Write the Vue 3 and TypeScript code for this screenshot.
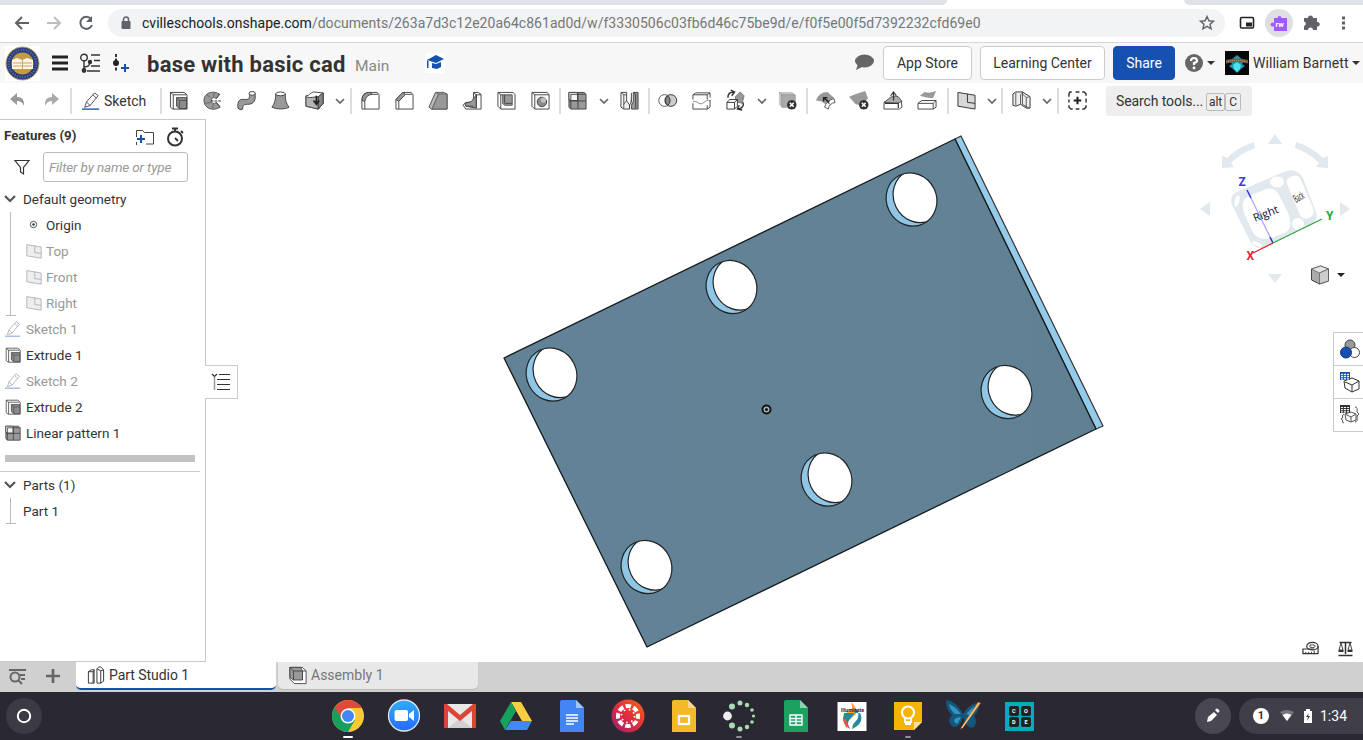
<script setup lang="ts">
interface Tool { icon?: string; w: number; kind: 'icon' | 'chev' | 'sep' }

const badge = '<circle cx="14.500" cy="14.500" r="5" fill="#333"/><path d="m12.500 12.500 4 4m0-4-4 4" stroke="#fff" stroke-width="1.500"/>'
const icons: Record<string, string> = {
  extrude: '<path d="M1.500 1.500H16L19 4V19H4L1.500 17Z" fill="#fff" stroke="#444"/><path d="M1.500 1.500 4.500 4V19M4.500 4H18" fill="none" stroke="#444"/><path d="M8 7H18.500V18.500H11L8 16Z" fill="#8c8c8c" stroke="#444"/><path d="m8 7 3 3V18M11 10h7" fill="none" stroke="#555"/>',
  revolve: '<path d="M17 3C10-1 1 2 1 10s9 12 17 7l-4-5c-3 2-5 1-5-2s2-4 5-2Z" fill="#999" stroke="#555"/><path d="M4 4 8 7M2 13l6-1M10 18l1-5M12 1.500l-1 5" stroke="#666"/><path d="M8 10.500h12" stroke="#333" stroke-dasharray="3 1"/><path d="m14 8 4-5M14 12l4 5" stroke="#444"/>',
  sweep: '<path d="M1 18C0 10 3 8 9 9c5 0 4-3 4-7h6c1 8-1 12-8 12-4 0-5 1-5 5Q3 21 1 18Z" fill="#999" stroke="#444"/><ellipse cx="16" cy="2.500" rx="3.200" ry="2" fill="#fff" stroke="#444"/>',
  loft: '<path d="M5 3h10c0 7 1 10 4 14-4 2.500-13 2.500-18 0C4 13 5 9 5 3Z" fill="#999" stroke="#444"/><ellipse cx="10" cy="3" rx="5" ry="2" fill="#fff" stroke="#444"/>',
  thicken: '<path d="M1 5c4 0 4-3 8-4l10 1v11l-5 6L1 16Z" fill="#fff" stroke="#444"/><path d="M1 6c5 2 8 0 13 0v13L1 16ZM14 6l5-4v11l-5 6Z" fill="#b5b5b5" stroke="#444"/><path d="M14 6l5-4v11l-5 6Z" fill="#888" stroke="#444"/><path d="M12 5v8m-3-3 3 4 3-4" fill="none" stroke="#222" stroke-width="1.800"/>',
  fillet: '<path d="M1 19V10Q1 1.500 9 1.500H17L19 4V19Z" fill="#fff" stroke="#444"/><path d="M1 10Q1 1.500 9 1.500l3 2Q5 4 4 11Z" fill="#999" stroke="#444"/><path d="M12 3.500h6M4 11v8" stroke="#444"/>',
  chamfer: '<path d="M1 19V9L8 1.500H17L19 4V19Z" fill="#fff" stroke="#444"/><path d="m1 9 7-7.500 3 2L4 11Z" fill="#999" stroke="#444"/><path d="M11 3.500h7M4 11v8" stroke="#444"/>',
  draft: '<path d="M0 17 7 1.500h9l3 2V19H3Z" fill="#fff" stroke="#555"/><path d="M10 3h9v16H3Z" fill="#999" stroke="#555"/><path d="m0 17 7-15.500L10 3 3 19Z" fill="#bbb" stroke="#666"/>',
  rib: '<path d="M0 15 3 12h8V1.500h5l3 2V19H3Z" fill="#fff" stroke="#444"/><path d="m2 13 7-2 5-7v14L3 16Z" fill="#999" stroke="#444"/><path d="M11 2l3 2v14M14 4h5M3 16h8" stroke="#444" fill="none"/>',
  shell: '<path d="M1 1.500H17L19 4V19H4L1 16Z" fill="#fff" stroke="#444"/><path d="M6 4h10v11H8L6 13Z" fill="#999" stroke="#555"/><path d="M8 4v9h8M4 4v15M1 1.500 4 4H6" stroke="#444" fill="none"/>',
  hole: '<path d="M1 1.500H17L19 4V19H4L1 16Z" fill="#fff" stroke="#444"/><path d="M4 4h15M4 4v15M1 1.500 4 4" stroke="#444"/><circle cx="11.500" cy="11.500" r="5" fill="#8c8c8c" stroke="#444"/><circle cx="13" cy="9.500" r="2.700" fill="#c2c2c2"/>',
  pattern: '<path d="M1 1.500h16l2 2V19H3l-2-2Z" fill="#999" stroke="#444"/><path d="M1 1.500h8l1 1.500v7H3L1 9Z" fill="#f3f3f3" stroke="#444"/><path d="M3 3.500h7M3 3.500V19M10.500 2v17M1 10.500h18M10.500 3.500h8" stroke="#444" fill="none"/>',
  mirror: '<path d="M1 1.500h6v9l3 4V19H4l-3-2Z" fill="#f0f0f0" stroke="#444"/><path d="M4 4v15M1 1.500 4 4h3M7 10l-3 4" stroke="#555" fill="none"/><path d="M12 2v10l-2 3v4M14 1.500h5V19h-7v-4l2-4Z" fill="#999" stroke="#444"/><path d="M16.500 4v14M14 2l3 2" stroke="#444"/>',
  boolean: '<circle cx="7" cy="10" r="6.200" fill="#fff" stroke="#555"/><circle cx="13.500" cy="10" r="6.200" fill="#ccc" stroke="#333"/><path d="M10.250 5a6.200 6.200 0 0 1 0 10 6.200 6.200 0 0 1 0-10Z" fill="#888" stroke="#333"/>',
  split: '<path d="M1 9V4l3-2h15v5M1 4h15v5M16 4l3-2M1 13v6h15v-4M16 19l3-2v-7" fill="none" stroke="#444"/><path d="M1 11c5-1 6 4 10 2s4-4 9-3" fill="none" stroke="#888"/>',
  transform: '<path d="m10 6 5-5 4 4-2 8-7-2Z" fill="#999" stroke="#777"/><path d="m1 12 3-3h8v7l-3 3H1ZM1 12h8v7M9 12l3-3" fill="#fff" stroke="#333"/><path d="M2 7c0-4 2-6 6-6M5-1l4 2-3 4M18 12c1 4-1 6-5 7m1-4-2 4 5 1" fill="none" stroke="#333" stroke-width="1.500"/>',
  delpart: '<path d="M1 1h14l3 3v13H4l-3-3Z" fill="#c4c4c4"/><path d="M4 4h14v13H4ZM1 1l3 3" fill="#aaa" stroke="#999"/>' + badge,
  modface: '<path d="M0 10Q3 1 12 1l7 6-9 7-4-3Z" fill="#999"/><path d="M9 17Q11 10 19 8l1 4q-6 1-7 7ZM12 12l3 2" fill="#fff" stroke="#555"/><path d="m14 12-6-5m0 4V7h4" fill="none" stroke="#222" stroke-width="1.500"/>',
  delface: '<path d="m-1 6 8-3 9-3 3 8-8 7-5-1Z" fill="#999"/>' + badge,
  moveface: '<path d="m0 12 5-3 13 1 1 7-3 2H0Z" fill="#fff" stroke="#444"/><path d="m0 12 4-3q4-5 11-3l4 5-5 2Z" fill="#aaa" stroke="#555"/><path d="M10 10V2M7 5l3-4 3 4M1 13h14v5" fill="none" stroke="#333" stroke-width="1.300"/>',
  replace: '<path d="m2 5 5-4q5 2 12-1l-3 7q-6 1-14-2Z" fill="#999"/><path d="m0 13 4-3h15v7l-3 2H0Zm0 0h16v6m0-6 3-3" fill="#fff" stroke="#444"/>',
  plane: '<path d="m1 1.500 18 3V19L1 16Z" fill="#d8d8d8" stroke="#333"/><path d="M11 3v9l8 1" fill="none" stroke="#333"/>',
  framei: '<path d="M1 3 4 1h7l8 5v12h-4L9 14l-5 2-3-1Z" fill="#eee" stroke="#333"/><path d="M4 2v13M11 1v13l7 4M11 2 9 4v10M15 18V7l-4-4M15 7l3-1" fill="none" stroke="#555"/>',
  addtool: '<path d="M4 1H2L1 3v3m0 3v3m0 3v2l2 2h2m3 0h4m3 0h2l2-2v-2m0-3V8m0-3V3l-2-2h-2m-3 0H8" fill="none" stroke="#333" stroke-width="1.500"/><path d="M10 6v8m-4-4h8" stroke="#222" stroke-width="2.200"/>',
  pencil: '<path d="m3 17 2-6L14 1l4 3-9 11Zm2-6 4 4M12 3l4 4" fill="#fff" stroke="#444"/><path d="M0 19h19" stroke="#1651b0" stroke-width="1.500"/>',
  planeS: '<path d="m1 2 18 3v14L1 16Z" fill="#eee" stroke="#aaa"/><path d="M11 3v9l8 1" fill="none" stroke="#aaa"/>'
}

const ic = (icon: string): Tool => ({ icon, w: 34, kind: 'icon' })
const chev = (w: number): Tool => ({ w, kind: 'chev' })
const sep = (w: number): Tool => ({ w, kind: 'sep' })
const tools: Tool[] = [
  ...['extrude', 'revolve', 'sweep', 'loft', 'thicken'].map(ic), chev(16), sep(6),
  ...['fillet', 'chamfer', 'draft', 'rib', 'shell', 'hole'].map(ic), sep(3),
  ic('pattern'), chev(18), ic('mirror'), sep(4),
  ...['boolean', 'split', 'transform'].map(ic), chev(18), ic('delpart'), sep(4),
  ...['modface', 'delface', 'moveface', 'replace'].map(ic), sep(5),
  ic('plane'), chev(15), sep(6), ic('framei'), chev(16), sep(6), ic('addtool')
]

const features = [
  { icon: 'pencil', name: 'Sketch 1', dim: true },
  { icon: 'extrude', name: 'Extrude 1', dim: false },
  { icon: 'pencil', name: 'Sketch 2', dim: true },
  { icon: 'extrude', name: 'Extrude 2', dim: false },
  { icon: 'pattern', name: 'Linear pattern 1', dim: false }
]
const holes: [number, number][] = [[551.500, 374.500], [731.500, 287], [911.500, 199.500], [1006.500, 392], [826.500, 479.500], [646.500, 567]]
const dots = [[10, 2, 2.500], [17, 4, 2.200], [22, 9, 1.800], [23.500, 15, 1.600], [22, 21, 1.800], [17, 26, 2.200], [10, 28, 2.500], [2, 24.500, 3], [-2.500, 15, 4.400], [2, 5.500, 3]]
</script>

<template>
  <div class="page">
    <div class="strip"><i class="s1"></i><i class="s2"></i></div>
    <div class="chrome">
      <svg class="nav" viewBox="0 0 108 36" fill="none" stroke="#5f6368" stroke-width="2">
        <path d="M29 18H16m6-6-6 6 6 6" /><path d="M47 18h13m-6-6 6 6-6 6" stroke="#bcbec1" />
        <path d="M91 14a6 6 0 1 0 1 6" /><path d="M92 11v6h-6Z" fill="#5f6368" stroke="none" />
      </svg>
      <div class="omni">
        <svg width="10" height="14" viewBox="0 0 10 14"><rect y="5" x=".5" width="9" height="8" rx="1" fill="#5f6368" /><path d="M2.500 6V3.500a2.500 2.500 0 0 1 5 0V6" fill="none" stroke="#5f6368" stroke-width="1.500" /></svg>
        <span class="url">cvilleschools.onshape.com<b>/documents/263a7d3c12e20a64c861ad0d/w/f3330506c03fb6d46c75be9d/e/f0f5e00f5d7392232cfd69e0</b></span>
        <svg class="star" width="16" height="16" viewBox="0 0 16 16"><path d="m8 1.500 1.900 4.300 4.600.4-3.500 3 1.100 4.600L8 11.400l-4.100 2.400L5 9.200l-3.500-3 4.600-.4Z" fill="none" stroke="#5f6368" stroke-width="1.400" /></svg>
      </div>
      <svg class="ext" viewBox="0 0 138 36">
        <rect x="15.500" y="12.500" width="13" height="10.500" rx="1.200" fill="#fff" stroke="#222" stroke-width="1.600" /><rect x="21" y="17.500" width="6" height="4" fill="#222" />
        <circle cx="54" cy="18" r="14" fill="#dfdfe0" /><path d="M49 13h3.500a2 2 0 1 1 4 0H62v13H49v-5a2 2 0 1 1 0-3Z" fill="#a259ff" /><text x="50.500" y="22" font-size="7.500" font-weight="700" fill="#fff">rw</text>
        <path d="M80 14h4a2.500 2.500 0 1 1 5 0h4v4a2.300 2.300 0 1 1 0 4.500V26h-4a2.500 2.500 0 0 0-5 0h-4v-4a2.300 2.300 0 0 0 0-4.500Z" fill="#5f6368" transform="translate(-1 -1)" />
        <path d="M118.500 11.500v3m0 2v3m0 2v3" stroke="#5f6368" stroke-width="3" />
      </svg>
    </div>

    <header class="head">
      <svg class="seal" viewBox="0 0 35 35"><rect width="35" height="35" fill="#fff" /><circle cx="17.500" cy="17.500" r="16.500" fill="#283c7c" stroke="#bba56b" /><circle cx="17.500" cy="17.500" r="13.700" fill="none" stroke="#64709b" stroke-width="2.500" stroke-dasharray="1 1.600" /><circle cx="17.500" cy="17.500" r="11" fill="#c39b48" /><path d="m7 14 5-2 5 2 5-2 6 2v9H7Z" fill="#fff4df" /><path d="M8 17h19M8 20h19M17.500 14v9" stroke="#c4a56a" /></svg>
      <svg class="burger" viewBox="0 0 16 16"><path d="M0 2h16M0 8h16M0 14h16" stroke="#222" stroke-width="2.800" /></svg>
      <svg class="ver" viewBox="0 0 20 20" fill="none" stroke="#333" stroke-width="1.400"><circle cx="4" cy="4.500" r="3.300" /><path d="M4 8v9M4 14q6 0 6-5M11 2h9M14 7.500h6M11 13h9M7 18h13" /><circle cx="4" cy="17.500" r="1.700" fill="#333" /><circle cx="10" cy="9" r="1.500" fill="#333" /></svg>
      <svg class="ins" viewBox="0 0 18 20"><path d="M4 1v18" stroke="#222" stroke-width="1.800" stroke-dasharray="3 1.500" /><circle cx="4" cy="10" r="3" fill="#222" /><path d="M13 11v8m-4-4h8" stroke="#1651b0" stroke-width="2" /></svg>
      <h1>base with basic cad</h1><span class="main">Main</span>
      <svg class="cap" viewBox="0 0 20 20"><rect width="20" height="20" rx="3" fill="#fff" /><path d="m2 7 9-5 8 4-8 4Z" fill="#1651b0" /><path d="M7 10v5l5 1 4-2V9l-5 2ZM2 7v8h1.500V8Z" fill="#1651b0" /></svg>
      <svg class="talk" viewBox="0 0 20 18"><ellipse cx="10.500" cy="7" rx="9.500" ry="6.500" fill="#666" /><path d="m4 10-2 6 8-4Z" fill="#666" /></svg>
      <button class="btn store">App Store</button><button class="btn learn">Learning Center</button><button class="btn share">Share</button>
      <svg class="help" viewBox="0 0 30 18"><circle cx="9" cy="9" r="9" fill="#666" /><path d="M6 7q0-3 3-3t3 2.700Q12 8 9 9v2" fill="none" stroke="#fff" stroke-width="2.200" /><circle cx="9" cy="14" r="1.400" fill="#fff" /><path d="M22 7h8l-4 4Z" fill="#333" /></svg>
      <svg class="avatar" viewBox="0 0 24 24"><rect width="24" height="24" fill="#050608" /><path d="m5 10 7-6 7 6-2 3 3 2-4 3-4 4-4-4-4-3 3-2Z" fill="#1b9aaa" /><path d="m8 14 4-3 4 3-1 4-3 3-3-3Z" fill="#49e1f0" /><path d="M1 9q11-3 22 0v3.500q-11-3-22 0Z" fill="#7a5a48" /><path d="M3 10.500q9-2 18 0" stroke="#d19a72" stroke-dasharray="1 1" fill="none" /></svg>
      <span class="user">William Barnett</span><svg class="caret" viewBox="0 0 8 4"><path d="M0 0h8L4 4Z" fill="#333" /></svg>
    </header>

    <div class="tools">
      <svg class="undo" viewBox="0 0 70 36"><path d="m10 16 7-6v4q8 0 7 9-2-5-7-5v4Z" fill="#999" /><path d="m59 16-7-6v4q-8 0-7 9 2-5 7-5v4Z" fill="#aaa" /></svg>
      <i class="tool sep sfirst"></i>
      <button class="sketch"><svg viewBox="0 0 20 20" v-html="icons.pencil"></svg>Sketch</button>
      <i class="tool sep ssecond"></i>
      <span v-for="(t, i) in tools" :key="i" class="tool" :class="t.kind" :style="{ width: t.w + 'px' }">
        <svg v-if="t.icon" viewBox="0 0 20 20" v-html="icons[t.icon]"></svg>
        <svg v-else-if="t.kind === 'chev'" class="chevron" viewBox="0 0 10 6"><path d="m1 1 4 4 4-4" fill="none" stroke="#666" stroke-width="1.700" /></svg>
      </span>
      <div class="search">Search tools... <kbd class="alt">alt</kbd><kbd>C</kbd></div>
    </div>

    <main>
      <aside>
        <div class="title"><span>Features (9)</span>
          <svg class="folder" viewBox="0 0 20 18"><path d="M1.500 9V2.500h6l2 2h9v11.500H11M1.500 14v3" fill="none" stroke="#444" /><path d="M6 7v8M2 11h8" stroke="#1651b0" stroke-width="2" /></svg>
          <svg class="watch" viewBox="0 0 18 20"><circle cx="9" cy="11.500" r="7" fill="#fff" stroke="#333" stroke-width="2" /><path d="M6 1.500h6M9 2v3M15 4l2 2M9 11l3 3" stroke="#333" stroke-width="1.800" /></svg>
        </div>
        <div class="filter"><svg viewBox="0 0 16 16"><path d="M1 1.500h14L9.500 8.500V15l-3-2V8.500Z" fill="none" stroke="#333" stroke-width="1.200" /></svg><div class="input">Filter by name or type</div></div>
        <div class="group"><svg viewBox="0 0 12 8"><path d="m1 1 5 5 5-5" fill="none" stroke="#555" stroke-width="2.200" /></svg>Default geometry</div>
        <div class="branch">
          <div class="row"><svg viewBox="0 0 16 16"><circle cx="7.500" cy="7.500" r="3.200" fill="none" stroke="#555" /><circle cx="7.500" cy="7.500" r="1.200" fill="#333" /></svg>Origin</div>
          <div v-for="p in ['Top', 'Front', 'Right']" :key="p" class="row dim"><svg viewBox="0 0 20 20" v-html="icons.planeS"></svg>{{ p }}</div>
        </div>
        <div v-for="f in features" :key="f.name" class="feat" :class="{ dim: f.dim }"><svg viewBox="0 0 20 20" v-html="icons[f.icon]"></svg>{{ f.name }}</div>
        <div class="roll"></div>
        <div class="group parts"><svg viewBox="0 0 12 8"><path d="m1 1 5 5 5-5" fill="none" stroke="#555" stroke-width="2.200" /></svg>Parts (1)</div>
        <div class="branch one"><div class="row">Part 1</div></div>
      </aside>

      <div class="view">
        <svg class="model" viewBox="206 119 1157 543">
          <defs><linearGradient id="shade" x1="0" y1="0" x2="1" y2="0"><stop offset="0" stop-color="#628397" /><stop offset=".7" stop-color="#628296" /><stop offset="1" stop-color="#5f7f92" /></linearGradient>
            <clipPath id="bore"><ellipse rx="25" ry="27" transform="rotate(-26)" /></clipPath></defs>
          <path d="m955 139 6-3 142 290-7 3Z" fill="#95cbea" stroke="#333" stroke-width="1.200" stroke-linejoin="round" />
          <path d="m504 358 451-219 141 290-449 218Z" fill="url(#shade)" stroke="#15191c" stroke-width="1.300" stroke-linejoin="round" />
          <g v-for="h in holes" :key="h[0]" :transform="`translate(${h[0]} ${h[1]})`">
            <ellipse rx="25" ry="27" transform="rotate(-26)" fill="#8fc5e5" />
            <g clip-path="url(#bore)"><ellipse cx="7" cy="-3.500" rx="25" ry="27" transform="rotate(-26 7 -3.500)" fill="#fff" stroke="#222" stroke-width="1.200" /></g>
            <ellipse rx="25" ry="27" transform="rotate(-26)" fill="none" stroke="#222" stroke-width="1.200" />
          </g>
          <circle cx="766.500" cy="409.500" r="4" fill="#a5b5be" stroke="#111" stroke-width="2" /><circle cx="766.500" cy="409.500" r="1.500" fill="#111" />
        </svg>
        <svg class="cube" viewBox="0 0 173 175">
          <g fill="#e1e8ee"><path d="m78 24 7-10 7 10ZM78 154h14l-7 9ZM20 82l-10 7 10 7ZM150 82l10 7-10 7Z" /><path d="M64 22Q48 27 37 38l-5-2v12l12-1-3-4q10-10 24-15ZM106 22q16 5 27 16l5-2v12l-12-1 3-4q-10-10-24-15Z" />
            <path d="M47 72Q39 75 42 85L60 121Q66 131 75 127L119 106Q129 102 126 92L113 58Q107 48 96 51Z" /></g>
          <g fill="#fff"><path d="M59 76 76 69Q85 67 89 75L98 93Q104 107 95 113L81 118Q67 121 62 111L54 93Q50 80 59 76Z" /><path d="M97 64q-2-5 4-7 7-4 10 3l12 28q3 7-4 10-7 3-10-5Z" /><ellipse cx="87" cy="62" rx="7" ry="5.500" /><ellipse cx="108" cy="104" rx="6" ry="6" transform="rotate(-25 108 104)" /><ellipse cx="47" cy="81" rx="2.300" ry="6" transform="rotate(15 47 81)" /><ellipse cx="67" cy="124" rx="2" ry="5" transform="rotate(-65 67 124)" /></g>
          <path d="M59 74 83 123" stroke="#aaaaf5" stroke-width="1.300" /><path d="m57 70 4 8M80 117l3 6" stroke="#3939cc" stroke-width="1.500" /><path d="M83 123 132 99" stroke="#2ca53b" stroke-width="1.200" /><path d="m83 123-20 10" stroke="#dd2832" stroke-width="1.300" />
          <g font-size="12" font-weight="700"><text x="48.500" y="66" fill="#3939dd">Z</text><text x="136" y="100" fill="#20a738">Y</text><text x="56.500" y="140" fill="#dd2930">X</text></g>
          <text transform="translate(65 102) rotate(-22)" font-size="11" fill="#111" class="face">Right</text><text transform="translate(106 83) rotate(-30) scale(.48 1.1)" font-size="10" fill="#111" class="face">Back</text>
          <g stroke="#444" stroke-linejoin="round"><path d="m121.500 149 9-3 8 3v12l-9 3-8-4Z" fill="#aaa" /><path d="m121.500 149 9-3 8 3-9 4Z" fill="#e5e5e5" stroke-width=".6" /><path d="m129.500 153 9-4v12l-9 3Z" fill="#ccc" stroke-width=".6" /></g><path d="M147 153h8l-4 4Z" fill="#222" />
        </svg>
        <button class="flyout"><svg viewBox="0 0 20 20"><path d="m1 2 2.500 2.500L6 2M8 2.500h11M6 7.500h13M6 12.500h13M6 17.500h13" fill="none" stroke="#333" stroke-width="1.200" /><path d="M3.500 5v13" stroke="#999" stroke-width="1.500" /></svg></button>
        <div class="rail">
          <button><svg viewBox="0 0 20 20" stroke="#444"><circle cx="10" cy="6" r="5" fill="#999" /><circle cx="14.500" cy="13.500" r="5" fill="#fff" /><circle cx="6" cy="13.500" r="5.500" fill="#1651b0" stroke="#143975" /></svg></button>
          <button><svg viewBox="0 0 20 20"><path d="m4 9 8-3 7 3v8l-7 3-7-4Zm1 1 7 3 7-4m-7 4v7" fill="#fff" stroke="#333" /><path d="M0 0h10v8H0Z" fill="#1651b0" /><path d="M1 2.500h8M1 4.700h8M1 6.900h8" stroke="#fff" stroke-width="1.300" /><path d="M3.300 0v8M6.600 0v8" stroke="#1651b0" /></svg></button>
          <button><svg viewBox="0 0 20 20"><path d="m5 9 6-2 5 2v6l-5 2-5-2Zm0 0 6 3 5-3m-5 3v5M4 9q-2 0-1.500 4L1 14l1.500 1Q2 18 4 18M15 2q3 0 2 5l2 2-2 2q1 6-2 6" fill="none" stroke="#555" /><path d="M0 0h10v8H0Z" fill="#333" /><path d="M1 2.500h8M1 4.700h8M1 6.900h8" stroke="#fff" stroke-width="1.200" /><path d="M3.300 0v8M6.600 0v8" stroke="#333" /></svg></button>
        </div>
        <div class="measure"><svg viewBox="0 0 18 16"><ellipse cx="11" cy="5" rx="6" ry="4" fill="#fff" stroke="#333" stroke-width="1.300" /><ellipse cx="11" cy="5" rx="3" ry="1.500" fill="none" stroke="#333" /><path d="M17 5v8H1V8h12" fill="none" stroke="#333" stroke-width="1.300" /><path d="M4 13v-2m3 2v-2m3 2v-2m3 2v-3" stroke="#333" /></svg><svg viewBox="0 0 16 16"><path d="M8 1v12M2 1.500h12M1 14.500h14" fill="none" stroke="#333" stroke-width="1.500" /><path d="M3.500 2 1.500 9h4ZM12.500 2l-2 7h4Z" fill="none" stroke="#444" /><path d="M1 9h5v2H1ZM10 9h5v2h-5Z" fill="#333" /></svg></div>
      </div>
    </main>

    <footer class="tabs">
      <svg class="find" viewBox="0 0 18 18"><path d="M0 2h17M11 7h5M12 11h4" stroke="#666" stroke-width="1.800" /><circle cx="6" cy="9" r="4.500" fill="none" stroke="#666" stroke-width="2" /><path d="m9 12 4 4" stroke="#666" stroke-width="2" /></svg>
      <svg class="plus" viewBox="0 0 16 16"><path d="M8 1v14M1 8h14" stroke="#666" stroke-width="2.700" /></svg>
      <div class="tab active"><svg viewBox="0 0 18 20"><path d="m1 6 3-2h3v14H1Zm0 0h5v12M6 6l2-2M10 3l2-2h2l3 3v12l-3 2h-4ZM10 3l4 2v13m0-13 3-1" fill="none" stroke="#333" /></svg>Part Studio 1</div>
      <div class="tab"><svg viewBox="0 0 20 20"><path d="M1 1h14l4 4v14H6l-5-5Z" fill="#fff" stroke="#444" /><path d="M1 1h12l2 4v10H5l-4-3Z" fill="#999" stroke="#444" /><path d="m1 1 4 4h14M5 5v10M15 5v10" fill="none" stroke="#444" /></svg>Assembly 1</div>
    </footer>

    <div class="shelf">
      <svg class="launcher" viewBox="0 0 36 36"><circle cx="18" cy="18" r="18" fill="#3c3b45" /><circle cx="18" cy="18" r="6.200" fill="none" stroke="#fff" stroke-width="2" /></svg>
      <div class="apps">
        <svg viewBox="0 0 32 32"><circle cx="16" cy="16" r="16" fill="#fbc934" /><path d="M2.500 7.500A16 16 0 0 0 16 32l7-12-7-4Z" fill="#17a05d" /><path d="M2.500 7.500A16 16 0 0 1 30 8H16l-7 9Z" fill="#dd4b3e" /><circle cx="16" cy="16" r="7.500" fill="#fff" /><circle cx="16" cy="16" r="6" fill="#4686f4" /></svg>
        <svg viewBox="0 0 32 32"><defs><linearGradient id="zm" x2="0" y2="1"><stop stop-color="#31aef8" /><stop offset="1" stop-color="#2868ff" /></linearGradient></defs><circle cx="16" cy="15.500" r="15.500" fill="url(#zm)" stroke="#dbe8f0" stroke-width="1.300" /><rect x="6.500" y="10" width="13.500" height="11" rx="2" fill="#fff" /><path d="m21 14 5-4v11l-5-4Z" fill="#fff" /></svg>
        <svg viewBox="0 0 32 32"><path d="M0 4h32v24H0Z" fill="#e8e8e8" /><path d="m4 28 12-10 12 10Z" fill="#d0d0d0" /><path d="M0 28V4h3l13 11L29 4h3v24h-4V11L16 21 4 11v17Z" fill="#dc4437" /></svg>
        <svg viewBox="0 0 32 32"><path d="M11 2h10l11 19H22Z" fill="#fbcd42" /><path d="m11 2 5 9L5 30l-5-9Z" fill="#16a15e" /><path d="M11 21h21l-5 9H5Z" fill="#4386f5" /></svg>
        <svg viewBox="0 0 32 32"><path d="M4 2q0-2 2-2h14l8 8v24H4Z" fill="#4285f4" /><path d="m20 0 8 8h-8Z" fill="#a1c2fa" /><path d="M10 15h12M10 18h12M10 21h12M10 24h8" stroke="#fff" stroke-width="1.300" /></svg>
        <svg viewBox="0 0 32 32"><defs><linearGradient id="cv" x2="1" y1="1" y2="0"><stop stop-color="#972174" /><stop offset=".5" stop-color="#e12c3c" /><stop offset="1" stop-color="#fa6a15" /></linearGradient></defs><circle cx="16" cy="16" r="16.500" fill="url(#cv)" /><circle cx="16" cy="16" r="10" fill="none" stroke="#fff" stroke-width="4" stroke-dasharray="5.500 2.354" stroke-dashoffset="2.750" /><circle cx="16" cy="16" r="6.500" fill="none" stroke="#fff" stroke-width="1.600" stroke-dasharray="1.600 3.505" /></svg>
        <svg viewBox="0 0 32 32"><path d="M4 2q0-2 2-2h14l8 8v24H4Z" fill="#f4b928" /><path d="m20 0 8 8h-8Z" fill="#fad98a" /><rect x="11" y="16" width="10" height="8" fill="none" stroke="#fff" stroke-width="2.200" /></svg>
        <svg viewBox="0 0 32 32"><circle v-for="(d, i) in dots" :key="i" :cx="d[0] + 6" :cy="d[1] + 1" :r="d[2]" :fill="i === 8 ? '#eee' : '#a9dcb1'" /></svg>
        <svg viewBox="0 0 32 32"><path d="M4 2q0-2 2-2h14l8 8v24H4Z" fill="#1ba261" /><path d="m20 0 8 8h-8Z" fill="#8dd1ae" /><path d="M10 15h12v10H10Zm0 3.500h12m-12 3h12M16 15v10" fill="none" stroke="#fff" stroke-width="1.400" /></svg>
        <svg viewBox="0 0 32 32"><path d="M1.500 2h29v29h-29Z" fill="#fff" /><path d="M15 2q7 6 5 12l-8 7-1 8Q2 15 15 10q2-3 0-8Z" fill="#f6a33c" /><path d="M8 13q-3 11 6 16-4-6 0-10 6-6 5-11 7 7 0 14-4 4-3 7 13-6 8-16" fill="#238aa0" /><path d="M7 16q-1 8 7 13-3-8-7-13Z" fill="#ef543e" /><path d="M16 28q-1-5 6-12" stroke="#fff" fill="none" /><text x="5" y="11.500" font-size="5" font-weight="700" textLength="23" fill="#222">Illuminate</text></svg>
        <svg viewBox="0 0 32 32"><path d="M2 2h28v20l-8 8H2Z" fill="#f5b400" /><path d="M22 22h8l-8 8Z" fill="#fde1a0" /><circle cx="16" cy="12.500" r="6" fill="none" stroke="#fff" stroke-width="2.200" /><path d="M13 18v4h6v-4M13 24h6" fill="none" stroke="#fff" stroke-width="2" /></svg>
        <svg viewBox="0 0 32 32"><path d="M15 14Q8 1-2 0q0 10 6 15-6 6 0 11 7 4 11-9 4 13 11 10 4-5 0-11 6-6 5-13-8-1-16 11Z" fill="#14577d" /><path d="M13 14Q7 6 1 4q1 6 6 10M13 17q-5 0-7 3 1 5 4 3M18 14l8-8q-2 6-4 9" fill="#3293bf" /><path d="m12 30 2-4L30 2l3 1-17 23Z" fill="#e37b30" /><path d="M14 28 31 3" stroke="#ffd084" stroke-width="1.300" /></svg>
        <svg viewBox="0 0 32 32"><path d="M1 2h29v29H1Z" fill="#00adbc" /><g fill="#222"><rect x="5" y="6" width="10" height="10" rx="2" /><rect x="17" y="6" width="10" height="10" rx="2" /><rect x="5" y="17" width="10" height="10" rx="2" /><rect x="17" y="17" width="10" height="10" rx="2" /></g><g font-size="5.500" font-weight="700" fill="#fff"><text x="8" y="13">C</text><text x="20" y="13">O</text><text x="8" y="24">D</text><text x="20.500" y="24">E</text></g></svg>
      </div>
      <i class="run r1"></i><i class="run r2"></i><i class="run r3"></i>
      <svg class="pen" viewBox="0 0 36 36"><circle cx="18" cy="18" r="18" fill="#484752" /><path d="m12 24 1-5 6-5 3 3-6 6ZM20 12l1-1q1-1 2 0l1 1q1 1 0 2l-1 1Z" fill="#fff" /></svg>
      <div class="status"><b>1</b><svg width="14" height="12" viewBox="0 0 14 12"><path d="M0 2q7-4 14 0L7 11Z" fill="#777680" /><path d="M2.500 5q4.500-3 9 0L7 11Z" fill="#fff" /></svg><svg width="8" height="14" viewBox="0 0 8 14"><path d="M2 0h4v2h2v12H0V2h2Z" fill="#fff" /><path d="m5 4-3 4h2l-1 4 3-5H4Z" fill="#333" /></svg><span>1:34</span></div>
    </div>
  </div>
</template>

<style scoped>
* { box-sizing: border-box; }
.page { position: relative; width: 1363px; height: 740px; overflow: hidden; display: flex; flex-direction: column; background: #fff; color: #333; font: 14px Roboto, sans-serif; }
svg { display: block; flex: none; overflow: visible; }
button { font: inherit; color: inherit; padding: 0; }
.strip { height: 5px; display: flex; justify-content: space-between; flex: none; }
.strip i { background: #dee1e6; height: 5px; }
.s1 { width: 947px; border-bottom-right-radius: 5px; }
.s2 { width: 179px; border-bottom-left-radius: 5px; }
.chrome { height: 38px; flex: none; display: flex; align-items: center; padding-bottom: 1px; border-bottom: 1px solid #d5d6d8; }
.nav { width: 108px; height: 36px; }
.omni { width: 1117px; height: 28px; background: #f1f3f4; border-radius: 14px; display: flex; align-items: center; padding: 0 10px 0 13px; }
.url { margin-left: 11px; color: #202124; letter-spacing: .03px; white-space: nowrap; }
.url b { font-weight: 400; color: #74777b; }
.star { margin-left: auto; }
.ext { width: 138px; height: 36px; }
.head { height: 40px; flex: none; background: #f7f7f7; display: flex; align-items: center; padding-left: 5px; }
.seal { width: 35px; height: 35px; }
.burger { width: 16px; height: 16px; margin-left: 12px; }
.ver { width: 20px; height: 20px; margin-left: 12px; }
.ins { width: 18px; height: 20px; margin-left: 12px; }
h1 { font: 700 22px Roboto, sans-serif; letter-spacing: .25px; margin: 2px 0 0 17px; width: 208px; white-space: nowrap; }
.main { font-size: 15.500px; color: #888; margin-top: 6px; width: 70px; }
.cap { width: 20px; height: 20px; }
.talk { width: 20px; height: 18px; margin-left: 409px; }
.btn { height: 34px; border: 1px solid #ccc; border-radius: 4px; background: #fff; }
.store { width: 89px; margin-left: 9px; }
.learn { width: 125px; margin-left: 8px; }
.share { width: 62px; margin-left: 8px; background: #1651b0; border-color: #1651b0; color: #fff; }
.help { width: 30px; height: 18px; margin-left: 10px; }
.avatar { width: 24px; height: 24px; margin-left: 10px; }
.user { margin-left: 4px; white-space: nowrap; width: 99px; letter-spacing: .05px; }
.caret { width: 8px; height: 4px; }
.tools { height: 36px; flex: none; display: flex; align-items: center; }
.undo { width: 70px; height: 36px; }
.tool { display: flex; flex: none; align-items: center; justify-content: center; height: 36px; }
.tool svg { width: 19px; height: 19px; margin: 0 1px 1px 0; }
.tool .chevron { width: 10px; height: 6px; margin: 0; }
.sep::before { content: ""; width: 2px; height: 26px; flex: none; background: #ddd; }
.sfirst { width: 2px; }
.ssecond { width: 4px; margin-right: -1px; }
.sketch { width: 87px; border: 0; background: none; display: flex; align-items: center; gap: 4px; padding-left: 10px; }
.sketch svg { width: 18px; height: 18px; }
.search { margin-left: 11px; width: 146px; height: 30px; background: #eee; border-radius: 3px; display: flex; align-items: center; padding-left: 10px; white-space: nowrap; letter-spacing: -.1px; }
kbd { font: 12px Roboto, sans-serif; border: 1px solid #bbb; border-radius: 2px; height: 18px; line-height: 16px; width: 16px; text-align: center; }
.alt { width: 19px; margin: 1px 0 0 3px; }
.alt + kbd { margin-top: 1px; }
main { height: 543px; flex: none; display: flex; }
aside { width: 206px; flex: none; border: 1px solid #c9c9c9; border-left: 0; font-size: 13.500px; }
.title { height: 34px; display: flex; align-items: center; padding-left: 4px; font-weight: 700; font-size: 13.300px; }
.title span { width: 131px; margin-top: -3px; }
.folder { width: 20px; height: 18px; }
.watch { width: 18px; height: 20px; margin-left: 11px; }
.filter { display: flex; align-items: center; padding-left: 14px; height: 30px; margin-top: -2px; }
.filter svg { width: 16px; height: 16px; margin-right: 13px; }
.input { width: 145px; height: 30px; border: 1px solid #bbb; border-radius: 3px; color: #999; font-style: italic; line-height: 28px; padding-left: 5px; white-space: nowrap; letter-spacing: -.15px; }
.group { height: 26px; margin-top: 4px; display: flex; align-items: center; padding-left: 4px; gap: 7px; }
.group svg { width: 12px; height: 8px; }
.branch { position: relative; margin-left: 10px; border-left: 1px solid #bbb; height: 104px; }
.branch::after { content: ""; position: absolute; width: 10px; border-top: 1px solid #bbb; left: -5px; bottom: 0; }
.row { height: 26px; display: flex; align-items: center; gap: 4px; padding-left: 15px; }
.row svg { width: 16px; height: 16px; margin-bottom: 1px; }
.dim { color: #999; }
.feat { height: 26px; display: flex; align-items: center; gap: 4px; padding-left: 6px; }
.feat svg { width: 16px; height: 16px; margin: 0 1px 1px -1px; }
.feat.dim svg { opacity: .45; }
.roll { width: 190px; height: 7px; background: #c2c2c2; margin: 9px 0 9px 5px; }
.parts { border-top: 1px solid #ccc; margin: 0 5px 0 0; height: 27px; }
.one { height: 26px; }
.one .row { padding-left: 12px; }
.view { position: relative; flex: 1; }
.model { width: 1157px; height: 543px; }
.cube { position: absolute; right: 0; top: 1px; width: 173px; height: 175px; }
.face { font-family: "Open Sans", sans-serif; }
.flyout { position: absolute; left: -1px; top: 246px; width: 33px; height: 34px; border: 1px solid #ccc; border-left: 0; background: #fff; padding-left: 6px; }
.flyout svg { width: 20px; height: 20px; }
.rail { position: absolute; right: 0; top: 213px; }
.rail button { display: flex; align-items: center; width: 30px; height: 34px; margin-bottom: -1px; padding-left: 6px; border: 1px solid #ccc; border-right: 0; background: #fff; }
.rail svg { width: 20px; height: 20px; }
.measure { position: absolute; right: 9px; bottom: 5px; display: flex; gap: 18px; }
.measure svg { width: 17px; height: 16px; }
.tabs { height: 30px; flex: none; background: #d0d0d0; display: flex; }
.find { width: 18px; height: 18px; margin: 6px 0 0 9px; }
.plus { width: 16px; height: 16px; margin: 6px 15px 0 18px; }
.tab { width: 200px; height: 27px; background: #e8e8e8; border-radius: 0 0 5px 5px; display: flex; align-items: center; gap: 4px; padding: 0 0 1px 11px; color: #777; box-shadow: 0 1px 1px #bbb; margin-left: 2px; }
.tab svg { width: 18px; height: 19px; }
.active { height: 28px; background: #fff; border-bottom: 2px solid #1651b0; color: #333; margin-left: 0; box-shadow: none; padding-bottom: 0; letter-spacing: -.05px; }
.shelf { height: 48px; flex: none; position: relative; background: #2a2933; display: flex; align-items: center; }
.launcher { width: 36px; height: 36px; margin-left: 6px; }
.apps { display: flex; gap: 24px; margin-left: 290px; }
.apps svg { width: 32px; height: 32px; }
.run { position: absolute; height: 2px; bottom: 2px; width: 6px; background: #929199; border-radius: 1px; }
.r1 { left: 343px; width: 10px; background: #fff; }
.r2 { left: 736px; }
.r3 { left: 905px; }
.pen { width: 36px; height: 36px; margin-left: 159px; }
.status { width: 124px; height: 36px; border-radius: 18px 0 0 18px; background: #403f49; display: flex; align-items: center; margin-left: auto; padding-left: 14px; color: #fff; }
.status b { width: 16px; height: 16px; border-radius: 8px; background: #fff; color: #333; font-size: 11px; line-height: 16px; text-align: center; margin-right: 11px; }
.status svg { margin-right: 10px; }
.status span { margin-left: -2px; }
</style>
